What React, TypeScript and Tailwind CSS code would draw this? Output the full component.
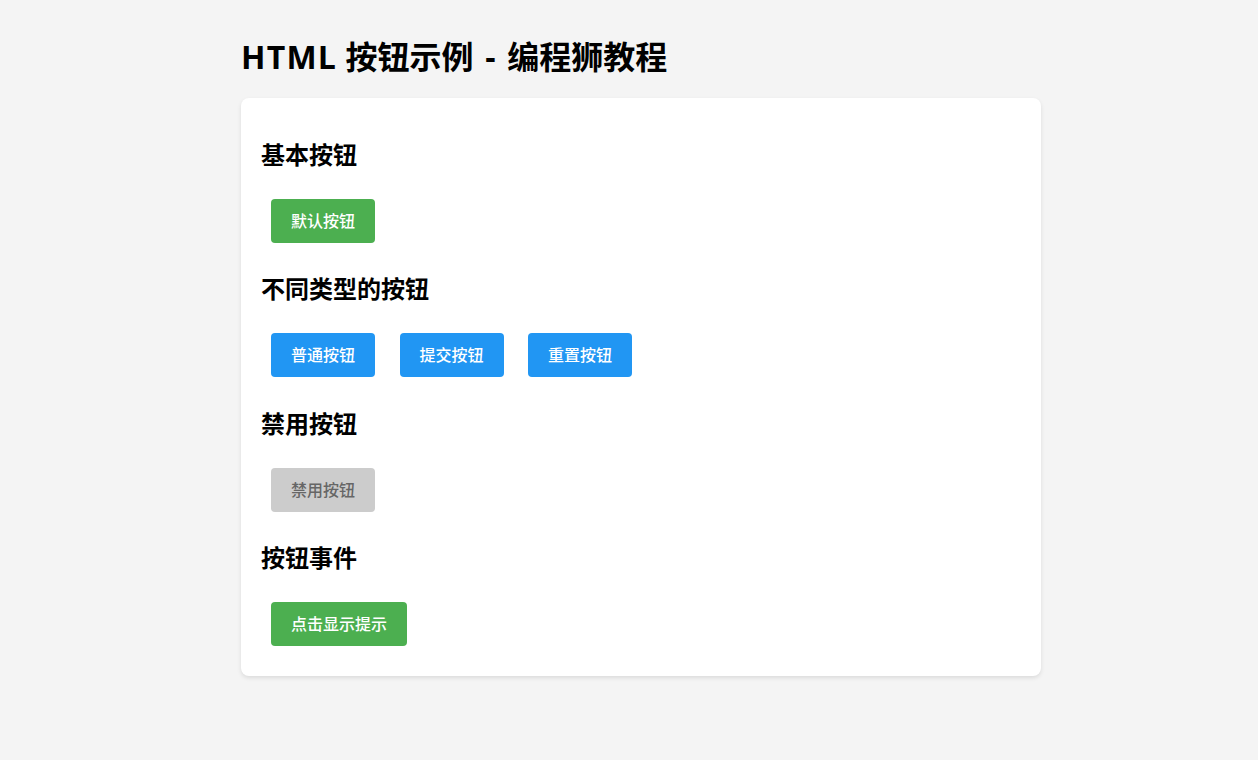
import React from "react";

const font = { fontFamily: '"Open Sans", "Noto Sans CJK SC", sans-serif' };

function Btn({ label, kind }: { label: string; kind: "green" | "blue" | "disabled" }) {
  const cls =
    kind === "green"
      ? "bg-[#4caf50] text-white"
      : kind === "blue"
      ? "bg-[#2196f3] text-white"
      : "bg-[#cccccc] text-[#666666]";
  return (
    <button
      disabled={kind === "disabled"}
      className={`mx-[10px] h-[44px] px-[20px] rounded-[4px] text-[16px] leading-[24px] font-medium ${cls}`}
    >
      {label}
    </button>
  );
}

function Section({ title, children }: { title: string; children: React.ReactNode }) {
  return (
    <div>
      <h2 className="mt-[20.75px] mb-[17.75px] h-[32px] text-[24px] leading-[32px] font-bold text-black">{title}</h2>
      <div className="flex gap-[4.5px] py-[10px]">{children}</div>
    </div>
  );
}

export default function App() {
  return (
    <div className="min-h-[760px] bg-[#f4f4f4]" style={font}>
      <div className="w-[800px] ml-[241px] pt-[37px]">
        <h1 className="h-[40px] text-[32px] leading-[40px] font-bold text-black mb-[21px] whitespace-nowrap">
          <span className="tracking-[1.2px]">HTML</span> 按钮示例<span className="[word-spacing:3.5px]"> - </span>编程狮教程
        </h1>
        <div className="bg-white rounded-[8px] shadow-[0_2px_4px_rgba(0,0,0,0.1)] px-[20px] pb-[20px] pt-[20px]">
          <Section title="基本按钮">
            <Btn label="默认按钮" kind="green" />
          </Section>
          <Section title="不同类型的按钮">
            <Btn label="普通按钮" kind="blue" />
            <Btn label="提交按钮" kind="blue" />
            <Btn label="重置按钮" kind="blue" />
          </Section>
          <Section title="禁用按钮">
            <Btn label="禁用按钮" kind="disabled" />
          </Section>
          <Section title="按钮事件">
            <Btn label="点击显示提示" kind="green" />
          </Section>
        </div>
      </div>
    </div>
  );
}
